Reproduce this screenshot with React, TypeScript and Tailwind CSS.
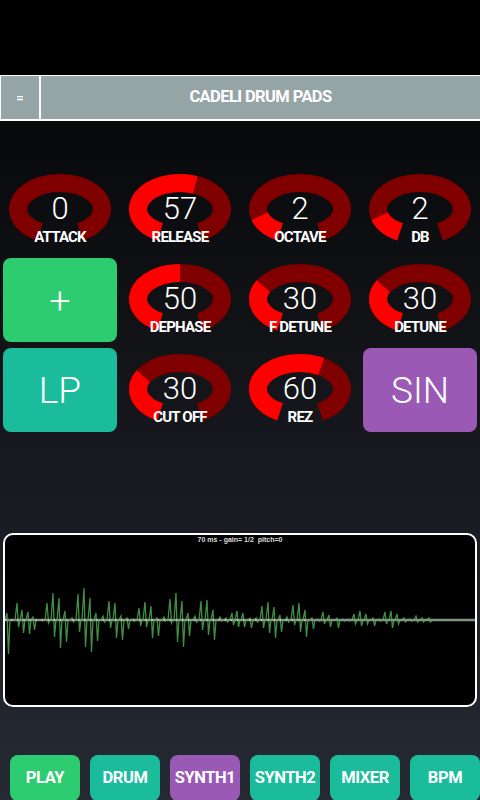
import React from 'react';

// knob geometry (cell is 120 x 90)
const CX = 60;
const CY = 44;
const RX = 42;
const RY = 26;
const START = (118.4 * Math.PI) / 180;
const SWEEP = (303.2 * Math.PI) / 180;

const pt = (t: number) => [CX + RX * Math.cos(t), CY + RY * Math.sin(t)];

const arc = (t0: number, t1: number) => {
  const [x0, y0] = pt(t0);
  const [x1, y1] = pt(t1);
  const large = t1 - t0 > Math.PI ? 1 : 0;
  return `M ${x0.toFixed(2)} ${y0.toFixed(2)} A ${RX} ${RY} 0 ${large} 1 ${x1.toFixed(2)} ${y1.toFixed(2)}`;
};

const Knob = ({ value, frac, label }: { value: number; frac: number; label: string }) => (
  <div className="relative h-[90px]">
    <svg width="120" height="90" viewBox="0 0 120 90" className="block">
      <path d={arc(START, START + SWEEP)} fill="none" stroke="#800000" strokeWidth="18" />
      {frac > 0 && (
        <path d={arc(START, START + SWEEP * frac)} fill="none" stroke="#ff0000" strokeWidth="18" />
      )}
    </svg>
    <div className="absolute inset-x-0 top-[29px] text-center text-[31px] font-light leading-[30px] text-white">
      {value}
    </div>
    <div className="absolute inset-x-0 top-[65px] text-center text-[15px] font-bold leading-[15px] tracking-[-0.8px] text-white">
      {label}
    </div>
  </div>
);

const Pad = ({ text, color }: { text: string; color: string }) => (
  <div className="h-[90px] p-[3px]">
    <div className={`flex h-full items-center justify-center rounded-lg text-[37px] font-light leading-none text-white ${color}`}>
      {text}
    </div>
  </div>
);

// [x, up, down] in page pixels, read off the wave
const spikes: number[][] = [
  [7, 7, 34], [17, 17, 7], [22, 10, 13], [28, 8, 14], [33, 3, 10], [47, 17, 3],
  [53, 27, 17], [59, 22, 28], [65, 9, 22], [72, 2, 2], [78, 26, 12], [84, 32, 27],
  [90, 22, 32], [96, 7, 21], [103, 4, 2], [109, 19, 8], [115, 17, 18], [121, 4, 20],
  [127, 2, 9], [133, 1, 1], [139, 12, 6], [145, 18, 7], [151, 14, 18], [157, 2, 16],
  [164, 3, 1], [170, 21, 3], [176, 27, 22], [182, 19, 27], [188, 7, 16], [195, 4, 2],
  [201, 19, 10], [207, 20, 15], [213, 10, 20], [220, 3, 1], [226, 2, 2], [232, 7, 5],
  [237, 9, 7], [243, 7, 7], [250, 2, 8], [256, 2, 2], [262, 14, 8], [268, 18, 13],
  [274, 13, 18], [280, 5, 12], [287, 3, 2], [293, 15, 5], [299, 17, 12], [305, 10, 17],
  [312, 2, 9], [318, 1, 1], [323, 8, 4], [329, 5, 7], [337, 2, 8], [343, 1, 1],
  [348, 1, 1], [354, 6, 4], [360, 9, 6], [366, 6, 4], [373, 2, 6], [379, 1, 1],
  [385, 8, 4], [391, 9, 8], [397, 6, 4], [404, 2, 2], [410, 1, 1], [416, 4, 2],
  [422, 2, 2], [429, 2, 2],
];

const wavePoints = () => {
  const mid = 85;
  const pts: string[] = ['0,85'];
  spikes.forEach(([x, up, down]) => {
    const px = x - 5;
    pts.push(`${px - 2},${mid}`, `${px},${mid - up}`, `${px + 1.5},${mid + down}`, `${px + 3},${mid}`);
  });
  pts.push('470,85');
  return pts.join(' ');
};

const Wave = () => (
  <div className="relative mx-[3px] h-[174px] overflow-hidden rounded-[10px] border-2 border-white bg-black">
    <svg width="470" height="170" viewBox="0 0 470 170" className="block">
      <polyline points={wavePoints()} fill="none" stroke="#3f8f42" strokeWidth="1.3" />
      <line x1="0" y1="85" x2="470" y2="85" stroke="#7d977d" strokeWidth="2.5" />
      <line x1="0" y1="85" x2="305" y2="85" stroke="#ffffff" strokeWidth="1.5" strokeDasharray="1.5 4.6" opacity="0.6" />
    </svg>
    <div className="absolute inset-x-0 top-[1px] whitespace-pre text-center font-['Liberation_Sans',sans-serif] text-[7px] font-bold leading-none text-[#dddddd]">
      70 ms - gain= 1/2  pitch=0
    </div>
  </div>
);

const tabs = [
  { label: 'PLAY', color: 'bg-[#2ecc71]' },
  { label: 'DRUM', color: 'bg-[#1abc9c]' },
  { label: 'SYNTH1', color: 'bg-[#9b59b6]' },
  { label: 'SYNTH2', color: 'bg-[#1abc9c]' },
  { label: 'MIXER', color: 'bg-[#1abc9c]' },
  { label: 'BPM', color: 'bg-[#1abc9c]' },
];

export default function App() {
  return (
    <div className="flex h-[800px] w-[480px] flex-col overflow-hidden bg-black font-['Roboto',sans-serif]">
      <div className="h-[75px] shrink-0" />

      <div className="flex h-[46px] shrink-0 border-t border-b-2 border-l border-white bg-[#95a5a6] text-white">
        <div className="flex w-[40px] items-center justify-center border-r-2 border-white text-[13px] font-bold">
          =
        </div>
        <div className="flex flex-1 items-center justify-center text-[16.5px] font-bold tracking-[-0.6px]">
          CADELI DRUM PADS
        </div>
      </div>

      <div className="flex flex-1 flex-col bg-linear-to-b from-[#08090b] to-[#262a33] pt-[44px]">
        <div className="grid grid-cols-4">
          <Knob value={0} frac={0} label="ATTACK" />
          <Knob value={57} frac={0.57} label="RELEASE" />
          <Knob value={2} frac={0.15} label="OCTAVE" />
          <Knob value={2} frac={0.15} label="DB" />

          <Pad text="+" color="bg-[#2ecc71]" />
          <Knob value={50} frac={0.5} label="DEPHASE" />
          <Knob value={30} frac={0.3} label="F DETUNE" />
          <Knob value={30} frac={0.3} label="DETUNE" />

          <Pad text="LP" color="bg-[#1abc9c]" />
          <Knob value={30} frac={0.3} label="CUT OFF" />
          <Knob value={60} frac={0.6} label="REZ" />
          <Pad text="SIN" color="bg-[#9b59b6]" />
        </div>

        <div className="mt-[98px]">
          <Wave />
        </div>

        <div className="mt-[48px] flex gap-[10px] pl-[10px]">
          {tabs.map((t) => (
            <div
              key={t.label}
              className={`flex h-[46px] w-[70px] shrink-0 items-center justify-center rounded-lg text-[16.5px] font-bold tracking-[-0.4px] text-white ${t.color}`}
            >
              {t.label}
            </div>
          ))}
        </div>
      </div>
    </div>
  );
}
